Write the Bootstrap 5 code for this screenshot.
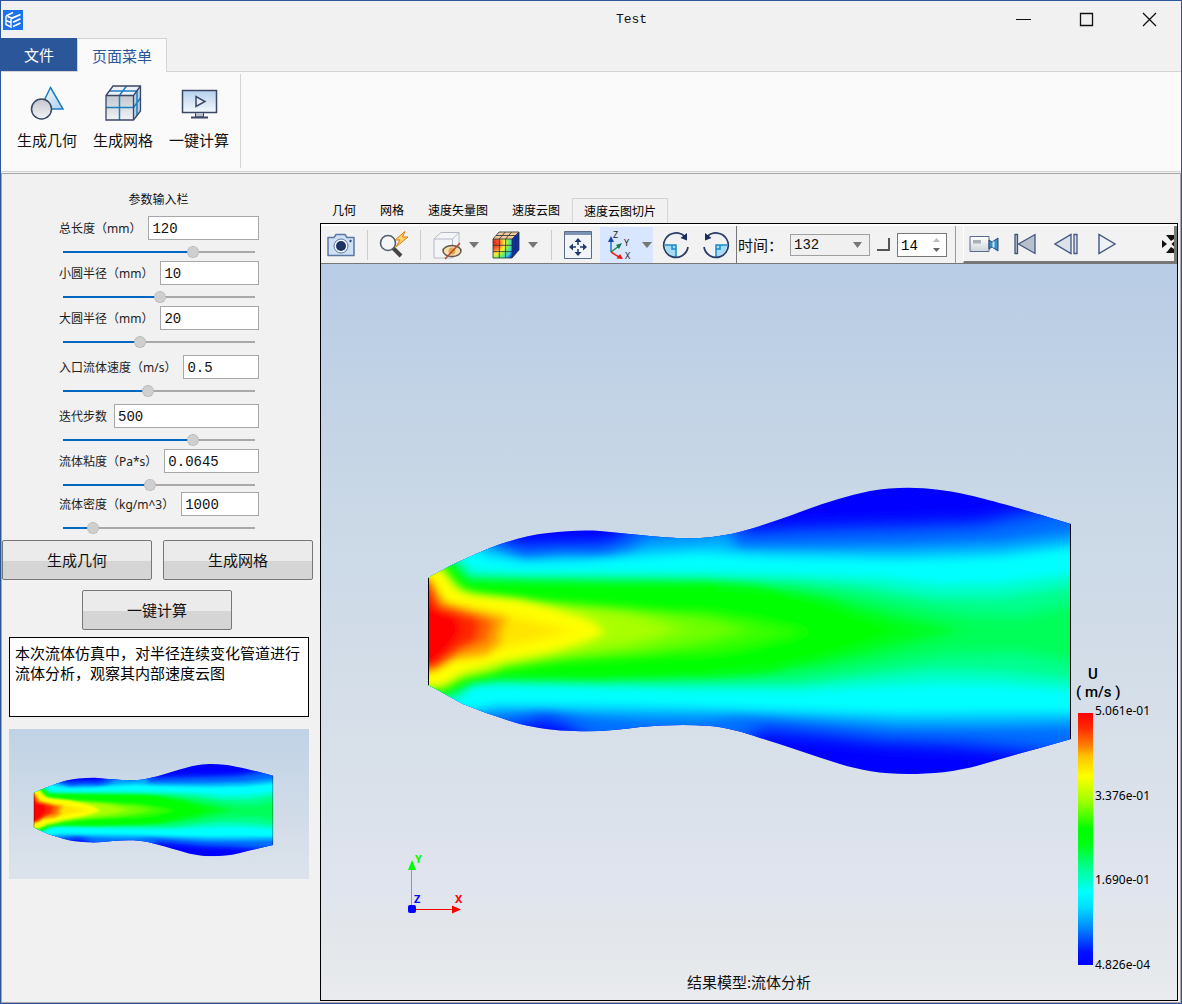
<!DOCTYPE html>
<html lang="zh-CN">
<head>
<meta charset="utf-8">
<meta name="viewport" content="width=device-width, initial-scale=1">
<title>Test</title>
<link href="https://cdn.jsdelivr.net/npm/bootstrap@5.3.0/dist/css/bootstrap.min.css" rel="stylesheet">
<style>
:root{--accent:#2b579a;--panel:#f1f1f1;--ribbon:#fafafa;--edge:#d4d4d4;--gray:#a7a7a7}
body{background:var(--panel);color:#111;font:12px/16px "Noto Sans","Noto Sans CJK SC",sans-serif}
button{color:inherit}
svg{display:block;flex:none}
.app-window{border:1px solid var(--accent)}
.mono{font-family:"Liberation Mono","Noto Sans CJK SC",monospace}
/* title bar */
.title-bar{height:37px}
.app-logo{margin-left:2px}
.win-title{padding-left:248px;font-size:13px}
.win-btn{width:63px;height:37px;border:0;background:none;padding:0}
/* ribbon */
.ribbon-tabs{height:34px;border-bottom:1px solid var(--edge);font-size:15px}
.file-tab{width:76px;border:0;border-radius:0;background:var(--accent);color:#fff}
.page-tab{width:90px;margin-bottom:-1px;border:1px solid var(--edge);border-bottom:0;background:var(--ribbon);color:var(--accent)}
.ribbon{height:100px;background:var(--ribbon);border-bottom:1px solid var(--edge)}
.ribbon-group{padding:0 3px 0 8px;border-right:1px solid var(--edge);margin:2px 0 3px}
.ribbon-btn{width:76px;border:0;background:none;padding:10px 0 0;font-size:15px;line-height:20px;white-space:nowrap}
.ribbon-btn svg{margin:0 auto 8px}
/* main */
.work-area{border:1px solid var(--gray);margin-top:1px}
.side-panel{width:318px}
.side-title{padding-top:18px;height:42px;padding-right:5px}
.field-list{margin-left:57px;width:200px}
.field{margin-bottom:2px}
.field-loose{margin-bottom:6px}
.field-end{margin-bottom:0}
.field label{color:#222;white-space:nowrap;padding-top:2px}
.field-line{gap:7px}
.num-box{height:24px;min-width:0;border:1px solid var(--gray);border-radius:0;background:#fff;padding:2px 3px 0;font-size:14px;line-height:20px;color:#111}
.level{appearance:none;display:block;width:192px;height:14px;margin:5px 0 0 4px;background:none}
.level::-webkit-slider-runnable-track{height:2px;background:linear-gradient(to right,#0067c0 calc(6px + var(--v)*(100% - 12px)),#a9a9a9 0)}
.level::-webkit-slider-thumb{appearance:none;width:12px;height:12px;margin-top:-5px;border-radius:50%;background:#cfcfcf;border:1px dotted #aaa}
.push{width:150px;height:40px;border:1px solid #777;border-radius:2px;background:linear-gradient(#ebebeb 52%,#d5d5d5 52%);font:15px/20px "Noto Sans CJK SC",sans-serif}
.push-row{gap:11px;padding-right:7px;margin-top:5px}
.push-solo{margin-top:10px;padding-right:8px}
.note-box{width:300px;height:80px;margin:7px 0 0 7px;border:1px solid #000;background:#fff;padding:5px;font:15px/20px "Noto Sans CJK SC",sans-serif;resize:none;overflow:hidden;color:#000}
.thumb{width:300px;height:150px;margin:12px 0 0 7px;background:linear-gradient(#c0d2e5,#dde3eb)}
/* viewer */
.viewer{min-width:0;padding-right:2px;padding-bottom:1px}
.view-tabs{padding-top:24px}
.view-tab{height:25px;padding:0 12px;border:0;background:none;line-height:25px;color:#000}
.view-tab.active{border:1px solid var(--edge);border-bottom:0;padding:0 11px;margin-bottom:-1px;background:var(--panel);position:relative;z-index:1}
.view-frame{border:1px solid #000}
.tool-bar{height:40px;background:#f2f2f2;border-top:2px solid #fff;border-bottom:1px solid #777}
.tool{width:40px;height:36px;border:0;background:none;padding:0;display:flex;align-items:center;justify-content:center}
.drop{width:13px;height:36px;border:0;background:none;padding:0}
.drop svg{margin:auto}
.drop-gap{margin-right:6px}
.bar-line{width:1px;height:30px;background:#ccc;margin:0 6px}
.picked{background:#d9e6ff;margin:0 3px 0 2px}
.time-set{border-left:1px solid #777;gap:7px}
.time-set label{font:15px/20px "Noto Sans CJK SC",sans-serif;white-space:nowrap;padding-left:1px}
.step-pick{width:80px;height:22px;border:1px solid #a0a0a0;border-radius:0;background:#f0f0f0;font-size:14px;line-height:18px;padding:1px 3px 0;appearance:none;color:#111}
.pick-caret{right:8px;top:8px;pointer-events:none}
.tick{width:13px;height:13px;border:solid #555;border-width:0 2px 2px 0}
.spin{width:50px;height:24px;border:1px solid #777;background:#fff;padding:0 6px 0 3px}
.spin input{width:26px;border:0;padding:2px 0 0;font-size:14px;background:none;appearance:textfield}
.play-set{border-left:1px solid #999;padding-left:7px}
.play-box{gap:1px;background:#f2f2f2;border:solid #777;border-width:0 3px 2px 0;border-left:1px solid #fff;overflow:hidden}
.viewport{background:linear-gradient(#b8cce5,#c8d7e6 29%,#dae1ea 71%,#e0e4ee 85%,#e2e6ea 90%,#e9ebee);min-height:500px}
.model{inset:0;width:100%;height:100%}
.legend{right:24px;bottom:27px;width:77px;color:#000}
.legend-name{font:500 15px/18px Roboto,sans-serif;margin-bottom:2px}
.legend-u{padding-left:12px}
.legend-bar{width:15px;height:252px;margin:10px 2px 0;background:linear-gradient(red,#ff2a00 6%,#ff8000 13%,#ffc000 17%,#ff0 25%,#a0ff00 35%,#0f0 46%,#00ff10 52%,#00ff80 60%,#0ff 71%,#00e0ff 77%,#0080ff 86%,#0010ff 95%,#00f)}
.legend-scale{height:270px}
.triad{left:84px;bottom:83px}
.model-name{left:0;right:0;bottom:8px;font:15px/20px "Noto Sans CJK SC",sans-serif;color:#111}
</style>
<script src="https://cdn.jsdelivr.net/npm/bootstrap@5.3.0/dist/js/bootstrap.bundle.min.js"></script>
</head>
<body>
<div class="app-window min-vh-100 d-flex flex-column">

<header class="title-bar d-flex align-items-center">
  <svg class="app-logo" width="20" height="20" viewBox="0 0 20 20"><path fill="#1a73e8" d="M0 0h20v20H0z"/><g fill="none" stroke="#fff" stroke-width="1.400"><path d="M3 6v8.500l5 2.500V9M3 10.500l5 2M3 6l7-3.500"/><path stroke-width="1.800" d="M4.500 6.500L9 8.200l8.500-3.700M10 12.200l7.500-3.500M10 16.500l7.500-3.500"/></g></svg>
  <div class="win-title mono flex-grow-1 text-center">Test</div>
  <button class="win-btn" aria-label="最小化"><svg class="mx-auto" width="15" height="15" stroke="#111"><path d="M0 7.500h15"/></svg></button>
  <button class="win-btn" aria-label="最大化"><svg class="mx-auto" width="15" height="15" stroke="#111" fill="none"><path d="M1.500 1.500h12v12h-12z" stroke-width="1.300"/></svg></button>
  <button class="win-btn" aria-label="关闭"><svg class="mx-auto" width="15" height="15" stroke="#111" stroke-width="1.300"><path d="M1 1l13 13M14 1L1 14"/></svg></button>
</header>

<nav class="ribbon-tabs d-flex">
  <button class="file-tab">文件</button>
  <button class="page-tab">页面菜单</button>
</nav>
<section class="ribbon d-flex">
  <div class="ribbon-group d-flex align-items-start">
    <button class="ribbon-btn"><svg width="38" height="38" viewBox="0 0 38 38"><defs><linearGradient id="gb" x2="1" y2="1"><stop stop-color="#fff"/><stop offset="1" stop-color="#a9cff0"/></linearGradient><linearGradient id="gg" x2="0" y2="1"><stop stop-color="#c2c6ce"/><stop offset="1" stop-color="#f2f3f5"/></linearGradient></defs><path d="M22.500 3.500L35 25H12z" fill="url(#gb)" stroke="#1b7fc0" stroke-width="1.500"/><circle cx="13.500" cy="25" r="10" fill="url(#gg)" stroke="#3a4766" stroke-width="1.500"/></svg>生成几何</button>
    <button class="ribbon-btn"><svg width="38" height="38" viewBox="0 0 38 38"><path d="M2 11.500L9 2h27.500v25L29 36H2z" fill="#eef1f5"/><path d="M2 11.500h27.500V36H2z" fill="url(#gg)"/><path d="M29.500 11.500L36.500 2v25l-7 9z" fill="#b5cfe5"/><path d="M5 7h28M15.500 11.500L22.500 2M15.500 11.500V36M2 23.500h27.500l7-9.500M33 7v24.500" fill="none" stroke="#1b7fc0" stroke-width="1.500"/><path d="M2 11.500L9 2h27.500v25l-7 9H2zM2 11.500h27.500l7-9.500M29.500 11.500V36" fill="none" stroke="#3a4766" stroke-width="1.300"/></svg>生成网格</button>
    <button class="ribbon-btn"><svg width="38" height="38" viewBox="0 0 38 38"><path d="M2.500 6.500h34v22h-34z" fill="url(#gs)" stroke="#3a4766" stroke-width="1.500"/><linearGradient id="gs" x2="0" y2="1"><stop stop-color="#b5d0ee"/><stop offset="1" stop-color="#f4f8fc"/></linearGradient><path d="M16 12.500v10l9-5z" fill="#e8edf3" stroke="#3a4766" stroke-width="1.500"/><path d="M15.500 28.500h8V33h-8z" fill="#b9c0cb" stroke="#3a4766"/><path d="M11 33.500h17" stroke="#3a4766" stroke-width="2"/></svg>一键计算</button>
  </div>
</section>

<main class="work-area flex-grow-1 d-flex">
  <aside class="side-panel flex-shrink-0">
    <div class="side-title text-center">参数输入栏</div>
    <div class="field-list">
      <div class="field"><div class="field-line d-flex align-items-center"><label for="f1">总长度（mm）</label><input class="num-box mono flex-fill" size="1" id="f1" value="120"></div><input type="range" class="level" aria-label="总长度" max="1000" value="689" style="--v:.689"></div>
      <div class="field"><div class="field-line d-flex align-items-center"><label for="f2">小圆半径（mm）</label><input class="num-box mono flex-fill" size="1" id="f2" value="10"></div><input type="range" class="level" aria-label="小圆半径" max="1000" value="506" style="--v:.506"></div>
      <div class="field field-loose"><div class="field-line d-flex align-items-center"><label for="f3">大圆半径（mm）</label><input class="num-box mono flex-fill" size="1" id="f3" value="20"></div><input type="range" class="level" aria-label="大圆半径" max="1000" value="394" style="--v:.394"></div>
      <div class="field field-loose"><div class="field-line d-flex align-items-center"><label for="f4">入口流体速度（m/s）</label><input class="num-box mono flex-fill" size="1" id="f4" value="0.5"></div><input type="range" class="level" aria-label="入口流体速度" max="1000" value="439" style="--v:.439"></div>
      <div class="field"><div class="field-line d-flex align-items-center"><label for="f5">迭代步数</label><input class="num-box mono flex-fill" size="1" id="f5" value="500"></div><input type="range" class="level" aria-label="迭代步数" max="1000" value="689" style="--v:.689"></div>
      <div class="field field-end"><div class="field-line d-flex align-items-center"><label for="f6">流体粘度（Pa*s）</label><input class="num-box mono flex-fill" size="1" id="f6" value="0.0645"></div><input type="range" class="level" aria-label="流体粘度" max="1000" value="450" style="--v:.45"></div>
      <div class="field field-end"><div class="field-line d-flex align-items-center"><label for="f7">流体密度（kg/m^3）</label><input class="num-box mono flex-fill" size="1" id="f7" value="1000"></div><input type="range" class="level" aria-label="流体密度" max="1000" value="133" style="--v:.133"></div>
    </div>
    <div class="push-row d-flex"><button class="push">生成几何</button><button class="push">生成网格</button></div>
    <div class="push-solo d-flex justify-content-center"><button class="push">一键计算</button></div>
    <textarea class="note-box d-block" aria-label="说明" readonly>本次流体仿真中，对半径连续变化管道进行流体分析，观察其内部速度云图</textarea>
    <div class="thumb"><svg width="300" height="150" viewBox="361 379 807 466" preserveAspectRatio="none"><use href="#flow"/></svg></div>
  </aside>

  <section class="viewer flex-grow-1 d-flex flex-column">
    <div class="view-tabs d-flex">
      <button class="view-tab">几何</button><button class="view-tab">网格</button><button class="view-tab">速度矢量图</button><button class="view-tab">速度云图</button><button class="view-tab active">速度云图切片</button>
    </div>
    <div class="view-frame flex-grow-1 d-flex flex-column">
      <div class="tool-bar d-flex align-items-center flex-shrink-0">
        <button class="tool" aria-label="截图"><svg width="30" height="30" viewBox="0 0 30 30"><path d="M2 7.500h6l2-3h9l2 3h7v18H2z" fill="#cfe0f2" stroke="#5a77a5" stroke-width="1.500" stroke-linejoin="round"/><circle cx="15" cy="16" r="7" fill="#f5f8fc" stroke="#5a77a5"/><circle cx="15" cy="16" r="5" fill="#1d3566"/><circle cx="24.500" cy="11" r="1.200" fill="#34507e"/></svg></button>
        <span class="bar-line"></span>
        <button class="tool" aria-label="快速缩放"><svg width="30" height="30" viewBox="0 0 30 30"><path d="M14 18l8 8" stroke="#444" stroke-width="4"/><circle cx="9" cy="13" r="7.500" fill="#f4f6f8" stroke="#555e6b" stroke-width="1.600"/><path d="M26 1.500L16 10h5l-4 7 12-10h-5.500z" fill="#ffd36b" stroke="#e07a10"/></svg></button>
        <span class="bar-line"></span>
        <button class="tool" aria-label="显示隐藏"><svg width="30" height="30" viewBox="0 0 30 30"><path d="M2 9l7-6.500h18V21l-6.500 7H2z" fill="#f4f5f7" stroke="#b4bac6"/><path d="M2 9h18.500v19M20.500 9L27 2.500" fill="none" stroke="#b4bac6"/><ellipse cx="20" cy="21" rx="9" ry="5.500" fill="#f5dfae" stroke="#605848" stroke-width="1.500"/><circle cx="20" cy="21" r="3.500" fill="#dfa94f"/><path d="M13 29L28 13" stroke="#c3462b" stroke-width="1.500"/></svg></button>
        <button class="drop drop-gap" aria-label="显示选项"><svg width="10" height="6"><path d="M0 0h10L5 6z" fill="#777"/></svg></button>
        <button class="tool" aria-label="云图"><svg width="30" height="30" viewBox="0 0 30 30"><defs><radialGradient id="gr" cx="0" cy=".2" r="1.200"><stop stop-color="#e11"/><stop offset=".3" stop-color="#f63"/><stop offset=".5" stop-color="#fe3"/><stop offset=".7" stop-color="#6e6"/><stop offset=".85" stop-color="#3ce"/><stop offset="1" stop-color="#14c"/></radialGradient></defs><path d="M2 9l6-7h20l-7 7z" fill="#f0c89a"/><path d="M2 9h19v19H2z" fill="url(#gr)"/><path d="M21 9l7-7v18l-7 8z" fill="#1231a8"/><path d="M2 9l6-7h20v18l-7 8H2zM2 9h19v19M21 9l7-7M8.300 28V9l6-7M14.600 28V9l6-7M2 15.300h19l7-7M2 21.600h19l7-7.500M5 5.500h19.500v18.500" fill="none" stroke="#233" stroke-width=".8"/></svg></button>
        <button class="drop drop-gap" aria-label="云图选项"><svg width="10" height="6"><path d="M0 0h10L5 6z" fill="#777"/></svg></button>
        <span class="bar-line"></span>
        <button class="tool" aria-label="适应窗口"><svg width="30" height="30" viewBox="0 0 30 30"><path d="M1.500 1.500h27v27h-27z" fill="#f1f4f8" stroke="#5b6a85"/><path d="M2 2h26v3H2z" fill="#7d93b5"/><g fill="#22396b"><path d="M15 8l3.500 4h-7zM15 26l3.500-4h-7zM6 17l4-3.500v7zM24 17l-4-3.500v7z"/></g><path d="M15 11v4M15 19v4M9 17h4M17 17h4" stroke="#22396b" stroke-width="1.500"/></svg></button>
        <div class="picked d-flex">
          <button class="tool" aria-label="坐标方向"><svg width="32" height="36" viewBox="-1 -4 32 36" font-family="Noto Sans" font-size="9" fill="#222"><path d="M6 21V8" stroke="#27c" stroke-width="1.500"/><path d="M6 5l3 6H3z" fill="#1648a8"/><path d="M6 21l8-6" stroke="#1a8a4a" stroke-width="1.500"/><path d="M17 12l-6 2 3 4z" fill="#0d8040"/><path d="M6 21l8 5" stroke="#e22" stroke-width="1.500"/><path d="M18 28l-6.500-.5 3.500-4.500z" fill="#e11"/><text x="8" y="7">Z</text><text x="19" y="15">Y</text><text x="20" y="28">X</text></svg></button>
          <button class="drop" aria-label="方向选项"><svg width="10" height="6"><path d="M0 0h10L5 6z" fill="#777"/></svg></button>
        </div>
        <button class="tool" aria-label="顺时针旋转"><svg width="28" height="28" viewBox="0 0 28 28"><path d="M3 14h11v12A12 12 0 0 1 3 14z" fill="#a5dcf3"/><path d="M3 14h11v12M10 14v4h4" fill="none" stroke="#1b8ac8" stroke-width="1.500"/><path d="M26 16a12.200 12.200 0 1 1-3.500-10.500" fill="none" stroke="#2a3c68" stroke-width="1.700"/><path d="M25 2v7.500L18.500 7z" fill="#182c5c"/></svg></button>
        <button class="tool" aria-label="逆时针旋转"><svg width="28" height="28" viewBox="0 0 28 28"><path d="M25 14H14v12a12 12 0 0 0 11-12z" fill="#a5dcf3"/><path d="M25 14H14v12M18 14v4h-4" fill="none" stroke="#1b8ac8" stroke-width="1.500"/><path d="M2 16A12.200 12.200 0 1 0 5.500 5.500" fill="none" stroke="#2a3c68" stroke-width="1.700" transform="matrix(1 0 0 1 0 0)"/><path d="M3 2v7.500L9.500 7z" fill="#182c5c"/></svg></button>
        <div class="time-set d-flex align-items-center align-self-stretch">
          <label for="step">时间：</label>
          <div class="position-relative"><select id="step" class="step-pick mono d-block"><option>132</option></select><svg class="pick-caret position-absolute" width="9" height="6"><path d="M0 0h9L4.500 6z" fill="#777"/></svg></div>
          <span class="tick"></span>
          <div class="spin d-flex align-items-center justify-content-between"><input class="mono" type="text" aria-label="时间步" value="14"><svg width="7" height="14"><path d="M0 4h7L3.500 0z" fill="#bbb"/><path d="M0 10h7L3.500 14z" fill="#666"/></svg></div>
        </div>
        <div class="play-set d-flex flex-grow-1 align-self-stretch ms-2">
          <div class="play-box d-flex flex-grow-1 align-items-center">
            <button class="tool" aria-label="录制"><svg width="30" height="20" viewBox="0 0 30 20"><path d="M1 2.500h19v15H1z" fill="url(#gw)" stroke="#5a6a8c"/><linearGradient id="gw" x2="0" y2="1"><stop stop-color="#fff"/><stop offset="1" stop-color="#cfd4dc"/></linearGradient><path d="M4 6h8v3.500H4z" fill="#aab0b8"/><path d="M20 6l3 2 6-4v13l-6-4-3 2z" fill="#3c8fc4" stroke="#2b4a78"/><path d="M24.500 7.500v6" stroke="#c9e4f5" stroke-width="2"/></svg></button>
            <button class="tool" aria-label="第一帧"><svg width="24" height="22" viewBox="0 0 24 22" fill="#b8c0cb" stroke="#40557f" stroke-width="1.300"><path d="M2 1.500h2.500v19H2zM22 1.500v19L5.500 11z"/></svg></button>
            <button class="tool" aria-label="上一帧"><svg width="24" height="22" viewBox="0 0 24 22" fill="#dde2e9" stroke="#40557f" stroke-width="1.300"><path d="M17 1.500v19L1 11zM20 1.500h3v19h-3z"/></svg></button>
            <button class="tool" aria-label="播放"><svg width="20" height="22" viewBox="0 0 20 22" fill="#eef1f5" stroke="#40557f" stroke-width="1.400"><path d="M2 1.500v19L18 11z"/></svg></button>
            <button class="border-0 p-0 bg-transparent ms-auto" aria-label="更多"><svg width="12" height="18" viewBox="0 0 12 18"><path d="M0 5l5 4-5 4zM4 0h8v4L9 6zM4 18h8v-4l-3-2zM12 6.500v5L9.500 9z" fill="#111"/></svg></button>
          </div>
        </div>
      </div>
      <div class="viewport flex-grow-1 position-relative">
        <svg class="model position-absolute" viewBox="321 264 856 736">
          <defs>
            <clipPath id="hull"><path d="M428 578C440 571 448 567 456 563C467 558 478 553 490 548C508 541 528 535 548 533C566 531 583 530 600 531C614 532 626 534 640 535C660 537 680 539 700 538C722 537 741 532 760 526C774 521 787 517 800 512C824 503 846 496 870 491C895 487 916 487 940 490C967 493 1005 504 1071 524V739C1040 748 1010 756 980 765C955 772 932 774 908 774C880 774 860 770 840 764C813 756 787 746 760 738C743 732 725 727 710 726C686 724 663 725 640 727C618 730 597 732 575 731C555 731 537 728 520 724C500 718 480 711 463 704C450 697 440 691 428 685z"/></clipPath>
            <filter id="soft4" x="-10%" y="-20%" width="120%" height="140%"><feGaussianBlur stdDeviation="4"/></filter>
            <filter id="soft6" x="-10%" y="-20%" width="120%" height="140%"><feGaussianBlur stdDeviation="12 5"/></filter>
            <filter id="soft8" x="-10%" y="-20%" width="120%" height="140%"><feGaussianBlur stdDeviation="9 7"/></filter>
            <g id="flow">
              <g clip-path="url(#hull)">
                <path fill="#00f" d="M420 480h660v300H420z"/>
                <g filter="url(#soft8)">
                  <path fill="#0030ff" d="M380 510H470L500 538 525 543 560 541 600 541 620 535 645 505H725L745 528 800 524 850 522 920 520 980 518 1030 505 1100 490V770L1030 757 960 750 880 746 820 740 790 738 760 735 730 760H610L570 731 545 724 530 726 505 732 480 760H380z"/>
                  <path fill="#0070ff" d="M380 510H470L505 545 525 549 560 547 600 547 625 540 645 515H725L745 538 800 535 850 534 920 532 980 529 1030 520 1100 505V755L1030 745 960 739 880 736 820 729 790 726 760 724 730 750H610L570 724 545 714 530 720 505 724 480 750H380z"/>
                </g>
                <g filter="url(#soft4)">
                  <path fill="#00a0ff" d="M400 530H470L500 549 525 557 560 554 600 555 630 548 650 538 725 532 740 546 800 546 900 545 1000 541 1090 530V727L1000 728 900 728 840 724 780 719 740 717 700 721 640 720 590 717 545 709 520 713 490 716 460 720H400z"/>
                  <path fill="#0cf" d="M400 530H465L490 551 525 560 570 557 610 558 650 549 720 545 740 551 800 552 900 553 1000 550 1090 540V718L1000 720 900 720 820 716 740 712 640 712 570 711 530 709 490 708 460 710H400z"/>
                </g>
                <g filter="url(#soft4)">
                  <path fill="#0ff" d="M400 530H455L485 557 525 563 580 562 640 557 700 553 760 557 900 560 1000 557 1090 546V712L1000 712 900 713 800 710 700 707 600 705 500 704 440 715H400z"/>
                  <path fill="#00ffc8" d="M410 545L458 556 475 570 520 572 600 572 700 572 800 574 880 577 940 584 1000 583 1090 571V692L1000 685 940 684 880 687 800 691 700 690 600 688 500 686 475 687 455 702H410z"/>
                  <path fill="#00ff90" d="M410 548L455 560 472 575 520 576 600 576 700 577 800 581 860 586 930 597 1000 597 1090 583V681L1000 672 930 670 860 677 800 684 700 686 600 684 500 682 475 683 452 698H410z"/>
                </g>
                <path filter="url(#soft8)" fill="#00ff58" d="M640 588L800 590 860 596 960 613 1020 616 1100 598V667L1020 652 950 654 860 668 800 676 640 676z"/>
                <g filter="url(#soft4)">
                  <path fill="#0f0" d="M410 550L451 562 468 580 520 581 600 582 700 583 760 588 780 595 800 632 780 668 760 672 700 676 600 680 500 679 470 682 450 694H410z"/>
                </g>
                <g filter="url(#soft6)">
                  <path fill="#00ff20" d="M700 586L780 589 830 598 880 612 960 630 880 651 830 662 780 670 700 674z"/>
                  <path fill="#0f0" d="M700 588L780 592 825 602 860 615 905 630 860 646 820 658 780 666 700 672z"/>
                  <path fill="#38ff00" d="M440 580L463 591 520 600 600 605 700 612 750 620 800 632 740 648 690 655 640 658 560 662 500 670 462 679 440 686z"/>
                  <path fill="#70ff00" d="M460 595L520 601 580 606 640 610 700 618 745 630 700 642 640 652 570 658 500 667 462 673z"/>
                  <path fill="#a8ff00" d="M460 595L520 601 580 606 630 614 680 629 640 642 570 653 500 666 462 673z"/>
                </g>
                <g filter="url(#soft4)">
                  <path fill="#a0ff00" d="M400 560L443 566 462 590 480 596 500 668 462 678 445 689H400z"/>
                  <path fill="#ff0" d="M405 560L438 566 455 588 470 595 520 600 555 609 590 620 606 632 585 642 555 651 500 662 465 672 440 686 405 690z"/>
                </g>
                <path filter="url(#soft6)" fill="#ffe400" d="M450 603L480 608 520 618 570 631 520 644 480 653 450 662z"/>
                <g filter="url(#soft4)">
                  <path fill="#ffa000" d="M400 575L430 580 445 603 470 611 507 618 500 632 500 643 485 655 455 658 432 671H400z"/>
                  <path fill="#ff6000" d="M400 575L429 580 440 604 470 612 494 620 488 642 462 651 435 669H400z"/>
                  <path fill="#ff2800" d="M400 575L428 580 438 606 465 614 480 620 476 640 460 649 435 668H400z"/>
                  <path fill="red" d="M400 575L425 580 435 609 455 615 462 630 450 648 438 660 426 671H400z"/>
                </g>
              </g>
              <path d="M428.500 578v107M1070.500 524v215" stroke="#000"/>
            </g>
          </defs>
          <use href="#flow"/>
        </svg>
        <div class="legend position-absolute">
          <div class="legend-name"><div class="legend-u">U</div><div>( m/s )</div></div>
          <div class="d-flex"><div class="legend-bar"></div><div class="legend-scale d-flex flex-column justify-content-between"><span>5.061e-01</span><span>3.376e-01</span><span>1.690e-01</span><span>4.826e-04</span></div></div>
        </div>
        <svg class="triad position-absolute" width="64" height="68" viewBox="0 -4 64 68" font-family="Noto Sans" font-size="11" font-weight="700"><path d="M6.500 56V14" stroke="#0f0"/><path d="M7 7l4 10H3z" fill="#0f0"/><path d="M7 56.500h40" stroke="red"/><path d="M56 56.500l-9-4v8z" fill="red"/><rect x="3" y="52" width="8" height="8" rx="2" fill="#00f"/><text x="10" y="10" fill="#0f0">Y</text><text x="9" y="50" fill="#00f">Z</text><text x="50" y="50" fill="red">X</text></svg>
        <div class="model-name position-absolute text-center">结果模型:流体分析</div>
      </div>
    </div>
  </section>
</main>
</div>
</body>
</html>
